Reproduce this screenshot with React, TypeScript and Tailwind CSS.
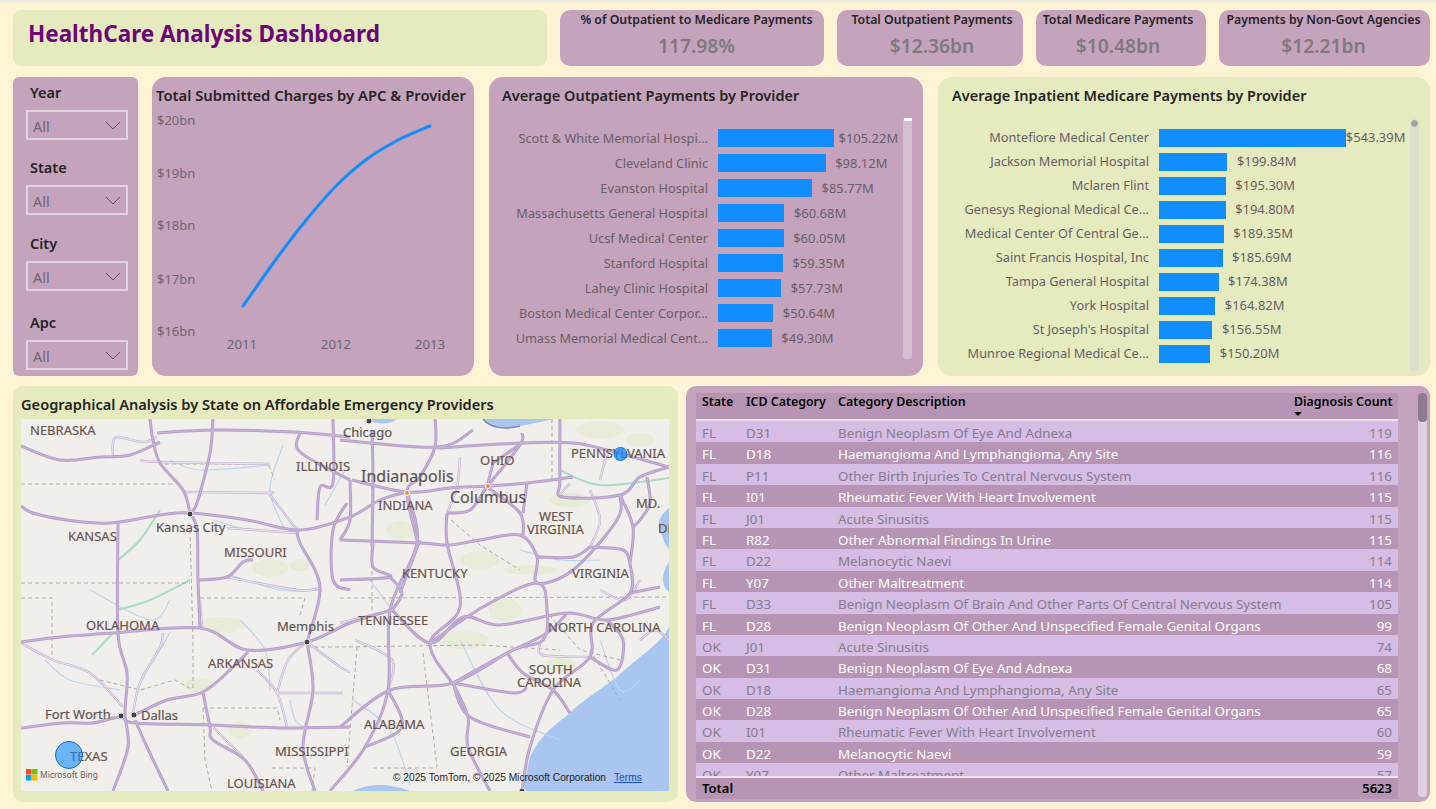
const font = "font-['Noto_Sans','Open_Sans',sans-serif]";

const kpis = [
  { title: '% of Outpatient to Medicare Payments', value: '117.98%', w: 'w-[264px] pl-[9px]' },
  { title: 'Total Outpatient Payments', value: '$12.36bn', w: 'w-[186px] pl-[4px]' },
  { title: 'Total Medicare Payments', value: '$10.48bn', w: 'w-[170px] pr-[6px]' },
  { title: 'Payments by Non-Govt Agencies', value: '$12.21bn', w: 'w-[211px] pr-[2px]' },
];

const outpatient = [
  ['Scott & White Memorial Hospi...', 105.22],
  ['Cleveland Clinic', 98.12],
  ['Evanston Hospital', 85.77],
  ['Massachusetts General Hospital', 60.68],
  ['Ucsf Medical Center', 60.05],
  ['Stanford Hospital', 59.35],
  ['Lahey Clinic Hospital', 57.73],
  ['Boston Medical Center Corpor...', 50.64],
  ['Umass Memorial Medical Cent...', 49.3],
] as const;

const inpatient = [
  ['Montefiore Medical Center', 543.39],
  ['Jackson Memorial Hospital', 199.84],
  ['Mclaren Flint', 195.3],
  ['Genesys Regional Medical Ce...', 194.8],
  ['Medical Center Of Central Ge...', 189.35],
  ['Saint Francis Hospital, Inc', 185.69],
  ['Tampa General Hospital', 174.38],
  ['York Hospital', 164.82],
  ["St Joseph's Hospital", 156.55],
  ['Munroe Regional Medical Ce...', 150.2],
] as const;

const rows = [
  ['FL', 'D31', 'Benign Neoplasm Of Eye And Adnexa', 119],
  ['FL', 'D18', 'Haemangioma And Lymphangioma, Any Site', 116],
  ['FL', 'P11', 'Other Birth Injuries To Central Nervous System', 116],
  ['FL', 'I01', 'Rheumatic Fever With Heart Involvement', 115],
  ['FL', 'J01', 'Acute Sinusitis', 115],
  ['FL', 'R82', 'Other Abnormal Findings In Urine', 115],
  ['FL', 'D22', 'Melanocytic Naevi', 114],
  ['FL', 'Y07', 'Other Maltreatment', 114],
  ['FL', 'D33', 'Benign Neoplasm Of Brain And Other Parts Of Central Nervous System', 105],
  ['FL', 'D28', 'Benign Neoplasm Of Other And Unspecified Female Genital Organs', 99],
  ['OK', 'J01', 'Acute Sinusitis', 74],
  ['OK', 'D31', 'Benign Neoplasm Of Eye And Adnexa', 68],
  ['OK', 'D18', 'Haemangioma And Lymphangioma, Any Site', 65],
  ['OK', 'D28', 'Benign Neoplasm Of Other And Unspecified Female Genital Organs', 65],
  ['OK', 'I01', 'Rheumatic Fever With Heart Involvement', 60],
  ['OK', 'D22', 'Melanocytic Naevi', 59],
  ['OK', 'Y07', 'Other Maltreatment', 57],
] as const;

// main highways, in page coordinates (the map's viewBox starts at 21,419)
const roads = [
  '150,419 153,440 160,463 183,490 190,513',
  '213,419 210,453 197,503 190,513',
  '157,433 213,430 293,432 350,437',
  '21,446 60,460 100,457 130,455 160,442',
  '21,506 33,513 67,520 110,523 160,515 190,513 247,520 300,530 350,517 380,500 407,492',
  '190,513 197,530 198,580 200,627',
  '198,580 227,577 243,562 253,560',
  '21,642 60,637 113,633 200,628 247,650 307,642 350,623 392,610',
  '118,523 118,633 127,673 125,713 128,747 113,791',
  '21,728 63,723 93,723 120,717 135,723 210,725 280,728 350,727',
  '135,715 167,700 203,692 233,667 248,652',
  '203,693 210,727 213,740 245,760 263,791',
  '135,720 147,747 168,791',
  '307,642 313,690 303,747 315,791',
  '307,642 320,587 300,543 297,530',
  '300,433 300,452 350,480',
  '333,419 333,483 320,487 317,520',
  '347,503 333,530 333,580 350,590',
  '352,480 407,492 450,488 488,486 527,483 573,477',
  '340,440 437,447 473,430',
  '437,448 522,443 573,443 607,450 669,467',
  '560,419 560,480 563,497 620,495 640,477 669,467',
  '522,433 520,445 487,487 470,510 447,513',
  '435,419 435,447 420,477 407,492 417,540',
  '340,540 420,543 450,545 480,540 520,535 537,557 537,583 573,570 617,520 620,495',
  '407,492 417,543 390,610 388,690 365,747 330,791',
  '447,513 447,543 460,607 430,643 452,683',
  '430,643 483,607 537,583 547,610 543,640 513,650 453,683 390,690 340,727',
  '567,613 547,633 507,653 453,683',
  '392,610 430,643 463,617 500,625 567,613 607,620 660,607',
  '630,563 630,593 593,623 590,657 553,690 530,747 522,791',
  '453,683 470,717 530,737',
  '453,683 468,717 468,747 490,791',
  '388,690 402,727 365,747',
  '372,430 373,480 372,547',
  '373,543 373,567 390,577 340,580',
  '390,577 402,593 392,610',
  '420,540 400,593',
  '350,480 350,520 340,540',
  '493,463 487,487',
  '522,443 493,463',
  '487,487 520,513 523,537',
  '527,483 523,513',
  '620,495 633,527 630,563',
  '590,547 623,550 630,563',
  '537,557 573,557 590,547',
  '647,477 650,503 640,520 633,527',
  '630,593 660,587',
  '507,653 523,673 553,690 570,713',
  '453,683 513,693 527,687',
  '590,657 617,670 623,640 607,620',
];

// smaller roads: pale core with a purple edge
const minor = [
  '113,457 113,443 118,437 143,442 157,437',
  '140,460 160,462 270,464',
  '185,492 267,493 270,495 297,530',
  '227,528 297,533',
  '227,577 297,590 320,588',
  '200,600 202,627',
  '163,633 160,647 140,683 133,713',
  '21,643 53,660 90,673 123,707',
  '277,693 343,693',
  '277,693 288,660 307,642',
  '257,670 277,693 287,727',
  '213,727 243,757',
  '307,642 340,667 350,672',
  '340,623 392,610',
  '460,457 457,487 447,513',
  '540,643 543,655 590,657',
  '570,483 560,497 580,497',
  '600,480 607,453',
  '590,490 600,520 590,547',
  '640,640 655,630 669,640',
  '600,590 625,600 640,580',
  '355,640 392,660 388,690',
];

const pale = [
  '213,520 250,530 300,532',
  '170,460 200,470 270,465',
  '230,575 280,590 322,590',
  '370,580 392,610',
  '45,660 70,680 120,690',
  '140,680 160,650 170,632',
  '290,700 300,725 340,727',
  '353,700 390,730 410,785',
  '460,640 500,710 560,740',
  '520,550 560,560 600,560',
  '600,640 620,690 640,680',
  '283,445 270,490 285,530',
  '345,470 325,505',
  '240,620 265,650 270,690',
  '90,590 150,620 170,600',
];

const stateLines = [
  '21,484 175,484',
  '165,464 268,464 275,480',
  '21,583 190,583',
  '21,598 52,598 52,660',
  '190,530 193,640 193,690',
  '200,598 305,598 300,615',
  '340,598 669,597',
  '307,647 340,647 480,645 560,650',
  '203,708 277,708 280,720',
  '203,708 205,760 212,791',
  '357,647 347,767',
  '423,653 437,767',
  '373,768 437,768',
  '272,768 315,768 312,791',
  '372,480 372,610',
  '451,520 480,545 520,570',
  '552,419 552,480',
  '545,610 580,650 620,660',
  '590,650 620,700',
  '100,680 140,690 175,680 193,690',
];

const greens = [
  [222, 625, 24, 8],
  [270, 568, 18, 9],
  [300, 565, 10, 6],
  [463, 640, 26, 9],
  [505, 610, 16, 11],
  [530, 570, 26, 5],
  [570, 500, 20, 7],
  [600, 430, 24, 9],
  [640, 440, 14, 7],
  [400, 530, 14, 9],
  [480, 560, 20, 9],
  [560, 665, 16, 7],
  [200, 685, 16, 7],
  [240, 730, 12, 9],
];

const labels = [
  { t: 'NEBRASKA', x: 30, y: 435, s: 13 },
  { t: 'ILLINOIS', x: 296, y: 471, s: 13 },
  { t: 'KANSAS', x: 68, y: 541, s: 13 },
  { t: 'Kansas City', x: 156, y: 532, s: 13, dark: true },
  { t: 'MISSOURI', x: 224, y: 557, s: 13 },
  { t: 'OKLAHOMA', x: 86, y: 630, s: 13 },
  { t: 'Memphis', x: 277, y: 631, s: 13, dark: true },
  { t: 'ARKANSAS', x: 208, y: 668, s: 13 },
  { t: 'Fort Worth', x: 45, y: 719, s: 13, dark: true },
  { t: 'Dallas', x: 141, y: 720, s: 13, dark: true },
  { t: 'TEXAS', x: 70, y: 761, s: 13 },
  { t: 'MISSISSIPPI', x: 275, y: 756, s: 13 },
  { t: 'LOUISIANA', x: 227, y: 788, s: 13 },
  { t: 'Chicago', x: 343, y: 437, s: 13, dark: true },
  { t: 'OHIO', x: 480, y: 465, s: 13 },
  { t: 'PENNSYLVANIA', x: 571, y: 458, s: 13 },
  { t: 'Indianapolis', x: 361, y: 482, s: 16, dark: true },
  { t: 'Columbus', x: 450, y: 503, s: 16, dark: true },
  { t: 'INDIANA', x: 378, y: 510, s: 13 },
  { t: 'WEST', x: 539, y: 521, s: 13 },
  { t: 'VIRGINIA', x: 527, y: 534, s: 13 },
  { t: 'MD.', x: 636, y: 508, s: 13 },
  { t: 'DE', x: 658, y: 533, s: 13 },
  { t: 'KENTUCKY', x: 402, y: 578, s: 13 },
  { t: 'VIRGINIA', x: 572, y: 578, s: 13 },
  { t: 'TENNESSEE', x: 358, y: 625, s: 13 },
  { t: 'NORTH CAROLINA', x: 548, y: 632, s: 13 },
  { t: 'SOUTH', x: 529, y: 674, s: 13 },
  { t: 'CAROLINA', x: 517, y: 687, s: 13 },
  { t: 'ALABAMA', x: 364, y: 729, s: 13 },
  { t: 'GEORGIA', x: 450, y: 756, s: 13 },
];

// catmull-rom through the traced points so the roads don't look ruled
function smooth(points: string) {
  const p = points.split(' ').map((s) => s.split(',').map(Number));
  let d = `M${p[0][0]} ${p[0][1]}`;
  for (let i = 0; i < p.length - 1; i++) {
    const a = p[Math.max(i - 1, 0)];
    const b = p[i];
    const c = p[i + 1];
    const e = p[Math.min(i + 2, p.length - 1)];
    d += ` C${b[0] + (c[0] - a[0]) / 6} ${b[1] + (c[1] - a[1]) / 6} ${c[0] - (e[0] - b[0]) / 6} ${c[1] - (e[1] - b[1]) / 6} ${c[0]} ${c[1]}`;
  }
  return d;
}

function Bars({ data, scale, firstGap, gap, textPad }: { data: readonly (readonly [string, number])[]; scale: number; firstGap: string; gap: string; textPad: string }) {
  return (
    <div className={`flex flex-col ${gap}`}>
      {data.map(([name, value], i) => (
        <div key={name} className="flex items-center h-[18px]">
          <div className={`w-[210px] shrink-0 text-right text-[12.75px] text-[#676067] whitespace-nowrap ${textPad}`}>{name}</div>
          <div className="ml-[9.5px] h-full bg-[#118dff] shrink-0" style={{ width: value * scale }} />
          <div className={`${i === 0 ? firstGap : 'ml-[9.5px]'} text-[12.95px] text-[#676067] whitespace-nowrap ${textPad}`}>
            ${value.toFixed(2)}M
          </div>
        </div>
      ))}
    </div>
  );
}

function Slicer({ label, className }: { label: string; className: string }) {
  return (
    <div className={className}>
      <div className="pl-[17px] h-[20px] leading-[20px] text-[14.5px] font-semibold text-[#252423]">{label}</div>
      <div className="mt-[8px] ml-[13px] w-[102px] h-[30px] border-2 border-[#dfd3de] flex items-center justify-between pl-[5px] pr-[5px]">
        <span className="pt-[4px] text-[14.4px] text-[#6f656f]">All</span>
        <svg width={16} height={9} viewBox="0 0 16 9" className="block">
          <polyline points="1,1 8,8 15,1" fill="none" stroke="#5c545c" strokeWidth={1} />
        </svg>
      </div>
    </div>
  );
}

function MapCanvas() {
  return (
    <div className="relative mt-[4px] h-[372px] w-[648px] ml-[8px] overflow-hidden bg-[#f1efeb]">
      <svg width={648} height={372} viewBox="21 419 648 372" className="block">
        {greens.map(([cx, cy, rx, ry], i) => (
          <ellipse key={i} cx={cx} cy={cy} rx={rx} ry={ry} fill="#dfe8c9" opacity={0.55} />
        ))}
        <path d="M669 627 C660 645 640 655 617 677 C600 690 580 702 570 713 C555 725 540 735 530 757 L523 791 L669 791 Z" fill="#a9c6f0" />
        <path d="M669 508 C660 515 655 525 662 535 C664 545 669 548 669 550 Z" fill="#a9c6f0" />
        <path d="M669 562 C662 572 660 585 669 592 Z" fill="#a9c6f0" />
        <path d="M353 791 C365 785 385 781 410 791 Z" fill="#a9c6f0" />
        <path d="M483 419 C490 428 505 430 520 426 C535 423 545 421 553 419 Z" fill="#a9c6f0" />
        <path d="M483 419 C490 428 505 430 520 426" fill="none" stroke="#7f8aa0" strokeWidth={1.5} />
        <path d="M368 419 C375 425 390 425 397 419 Z" fill="#a9c6f0" />
        {pale.map((p, i) => (
          <path key={i} d={smooth(p)} fill="none" stroke="#bcd5ee" strokeWidth={1.2} />
        ))}
        {['118,560 140,540 160,510', '118,610 150,600 190,580', '113,633 92,655', '560,470 600,485 669,478'].map((p) => (
          <path key={p} d={smooth(p)} fill="none" stroke="#a9dcc4" strokeWidth={2} />
        ))}
        {stateLines.map((p, i) => (
          <polyline key={i} points={p} fill="none" stroke="#aeaca6" strokeWidth={1} strokeDasharray="4 3" />
        ))}
        {minor.map((p, i) => (
          <path key={i} d={smooth(p)} fill="none" stroke="#c5b2d5" strokeWidth={2.4} />
        ))}
        {minor.map((p, i) => (
          <path key={i} d={smooth(p)} fill="none" stroke="#f4eff6" strokeWidth={0.9} />
        ))}
        {roads.map((p, i) => (
          <path key={i} d={smooth(p)} fill="none" stroke="#b69ecb" strokeWidth={3} strokeLinejoin="round" />
        ))}
        {roads.map((p, i) => (
          <path key={i} d={smooth(p)} fill="none" stroke="#d5c6e0" strokeWidth={0.6} strokeLinejoin="round" />
        ))}
        {[[190, 514], [307, 642], [121, 716], [134, 715], [369, 421], [522, 791]].map(([cx, cy]) => (
          <circle key={cx} cx={cx} cy={cy} r={3} fill="#444" stroke="#eee" strokeWidth={1} />
        ))}
        {[[407, 493], [488, 486]].map(([cx, cy]) => (
          <circle key={cx} cx={cx} cy={cy} r={2.5} fill="#f58a3c" stroke="#fff" strokeWidth={1} />
        ))}
        {labels.map((l) => (
          <text
            key={l.t + l.x}
            x={l.x}
            y={l.y}
            fontSize={l.s}
            fontFamily="Noto Sans, sans-serif"
            fill={l.dark ? '#5c5654' : '#69554f'}
            stroke={l.dark ? '#5c5654' : '#69554f'}
            strokeWidth={0.2}
          >
            {l.t}
          </text>
        ))}
        <circle cx={69} cy={755} r={13.5} fill="#118dff" fillOpacity={0.6} stroke="#1168c4" strokeWidth={1} />
        <circle cx={620.5} cy={454} r={6.5} fill="#118dff" fillOpacity={0.75} stroke="#1168c4" strokeWidth={1} />
        <rect x={26} y={769} width={5.5} height={5.5} fill="#f25022" />
        <rect x={32} y={769} width={5.5} height={5.5} fill="#7fba00" />
        <rect x={26} y={775} width={5.5} height={5.5} fill="#00a4ef" />
        <rect x={32} y={775} width={5.5} height={5.5} fill="#ffb900" />
        <text x={40} y={778} fontSize={8.5} fontFamily="Noto Sans, sans-serif" fill="#5e5e5e">Microsoft Bing</text>
        <text x={393} y={781} fontSize={10.2} fontFamily="Liberation Sans, sans-serif" fill="#222">© 2025 TomTom, © 2025 Microsoft Corporation</text>
        <text x={614} y={781} fontSize={10.2} fontFamily="Liberation Sans, sans-serif" fill="#1a4fb5" textDecoration="underline">Terms</text>
      </svg>
    </div>
  );
}

export default function App() {
  return (
    <div className={`${font} w-[1436px] h-[809px] overflow-hidden bg-[#fff3d6]`}>
      <div className="h-[2px] bg-[#e9e7e1]" />
      <div className="pt-[8px] pl-[13px]">
        {/* top row */}
        <div className="flex gap-[13px] h-[56px]">
          <div className="w-[534px] rounded-[8px] bg-[#e5ebbe] pl-[15px] pt-[6px]">
            <h1 className="text-[22.5px] leading-[36px] font-bold text-[#6d0478] whitespace-nowrap">HealthCare Analysis Dashboard</h1>
          </div>
          {kpis.map((k) => (
            <div key={k.title} className={`${k.w} rounded-[10px] bg-[#c5a3bd] flex flex-col items-center`}>
              <div className="mt-[1px] text-[12.3px] leading-[18px] font-semibold text-[#252423] whitespace-nowrap">{k.title}</div>
              <div className="mt-[3px] text-[19.2px] leading-[27px] font-semibold text-[#7d7a7d]">{k.value}</div>
            </div>
          ))}
        </div>

        {/* middle row */}
        <div className="mt-[11px] flex h-[299px]">
          <div className="w-[125px] rounded-[6px] bg-[#c5a3bd] pt-[5px]">
            <Slicer label="Year" className="" />
            <Slicer label="State" className="mt-[17px]" />
            <Slicer label="City" className="mt-[18px]" />
            <Slicer label="Apc" className="mt-[21px]" />
          </div>

          <div className="ml-[14px] w-[322px] rounded-[14px] bg-[#c5a3bd]">
            <div className="pl-[4px] pt-[7px] text-[14.8px] leading-[22px] font-semibold text-[#252423] whitespace-nowrap">
              Total Submitted Charges by APC &amp; Provider
            </div>
            <svg width={322} height={248} viewBox="152 106 322 248" className="block">
              {[['$20bn', 125], ['$19bn', 178], ['$18bn', 230], ['$17bn', 284], ['$16bn', 336]].map(([t, y]) => (
                <text key={t} x={157} y={y} fontSize={13} fontFamily="Noto Sans, sans-serif" fill="#6f656f">{t}</text>
              ))}
              {[['2011', 242], ['2012', 336], ['2013', 430]].map(([t, x]) => (
                <text key={t} x={x} y={349} textAnchor="middle" fontSize={13.3} fontFamily="Noto Sans, sans-serif" fill="#6f656f">{t}</text>
              ))}
              <path
                d={smooth('243,306 277,258 307,219 337,185 367,159 400,139 430,126')}
                fill="none"
                stroke="#118dff"
                strokeWidth={3}
                strokeLinecap="round"
              />
            </svg>
          </div>

          <div className="relative ml-[15px] w-[434px] rounded-[14px] bg-[#c5a3bd]">
            <div className="pl-[13px] pt-[7px] text-[14.5px] leading-[22px] font-semibold text-[#252423] whitespace-nowrap">
              Average Outpatient Payments by Provider
            </div>
            <div className="mt-[23px] pl-[9px]">
              <Bars data={outpatient} scale={1.1026} firstGap="ml-[5px]" gap="gap-[7px]" textPad="pt-[2px]" />
            </div>
            <div className="absolute left-[414px] top-[41px] w-[9px] h-[241px] rounded-[3px] bg-[#d2c0d0]">
              <div className="mx-auto w-[8px] h-[3px] rounded-[1px] bg-white" />
            </div>
          </div>

          <div className="relative ml-[15px] w-[492px] rounded-[14px] bg-[#e5ebbe]">
            <div className="pl-[14px] pt-[7px] text-[14.5px] leading-[22px] font-semibold text-[#252423] whitespace-nowrap">
              Average Inpatient Medicare Payments by Provider
            </div>
            <div className="mt-[23px] pl-[1px]">
              <Bars data={inpatient} scale={0.3447} firstGap="ml-0" gap="gap-[6px]" textPad="" />
            </div>
            <div className="absolute left-[472px] top-[48px] w-[9px] h-[246px] rounded-[3px] bg-[#dedfcb]">
              <div className="absolute -top-[6px] left-[0px] w-[9px] h-[9px] rounded-full bg-[#a3a39b] border border-[#e8e8d8]" />
            </div>
          </div>
        </div>

        {/* bottom row */}
        <div className="mt-[10px] flex h-[416px]">
          <div className="w-[665px] rounded-[10px] bg-[#e5ebbe]">
            <div className="pl-[8px] pt-[8px] text-[14.6px] leading-[20px] font-semibold text-[#252423] whitespace-nowrap">
              Geographical Analysis by State on Affordable Emergency Providers
            </div>
            <div className="pt-[1px]">
              <MapCanvas />
            </div>
          </div>

          <div className="relative ml-[8px] w-[744px] rounded-[10px] bg-[#c5a3bd] pl-[10px] pt-[7px]">
            <div className="w-[702px] text-[13.36px] text-[#857c8c]">
              <div className="grid grid-cols-[44px_92px_455px_111px] h-[26px] bg-[#b794b3] text-[12.4px] font-semibold text-black leading-[18px]">
                <div className="pl-[6px]">State</div>
                <div className="pl-[6px]">ICD Category</div>
                <div className="pl-[6px]">Category Description</div>
                <div className="relative pl-[7px] whitespace-nowrap">
                  Diagnosis Count
                  <div className="absolute left-[7px] top-[19px] w-0 h-0 border-x-[4px] border-x-transparent border-t-[4px] border-t-black" />
                </div>
              </div>
              <div className="h-[2px] bg-[#efe6f0]" />
              <div className="h-[355px] overflow-hidden">
                {rows.map(([st, code, desc, n], i) => (
                  <div
                    key={i}
                    className={`grid grid-cols-[44px_92px_455px_111px] h-[21.4px] leading-[24px] ${i % 2 === 0 ? 'bg-[#d5bde5]' : 'bg-[#b794b3] text-white'}`}
                  >
                    <div className="pl-[6px]">{st}</div>
                    <div className="pl-[6px]">{code}</div>
                    <div className="pl-[6px] whitespace-nowrap">{desc}</div>
                    <div className="pr-[6px] text-right">{n}</div>
                  </div>
                ))}
              </div>
              <div className="h-[2px] bg-[#efe6f0]" />
              <div className="flex justify-between h-[21px] leading-[21px] bg-[#b794b3] px-[6px] text-[13px] font-semibold text-black">
                <span>Total</span>
                <span>5623</span>
              </div>
            </div>
            <div className="absolute left-[732px] top-[7px] w-[9px] h-[404px] rounded-[4px] bg-[#e0cfe0]">
              <div className="h-[29px] rounded-[4px] bg-[#8f7a8f]" />
            </div>
          </div>
        </div>
      </div>
    </div>
  );
}
